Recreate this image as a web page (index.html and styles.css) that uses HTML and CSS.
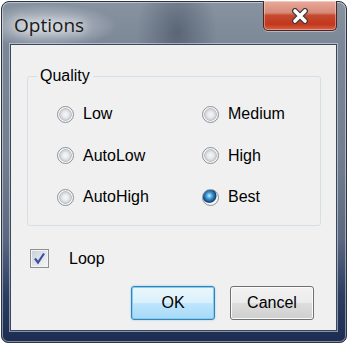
FILE: index.html
```html
<!DOCTYPE html>
<html>
    <head>
        <title>Options</title>
        <link rel="stylesheet" href="styles.css">
    </head>
    <body>
        <div class="window">
            <div class="titlebar">
                <span class="title">Options</span>
                <button type="button" class="close">
                    <svg width="16" height="16" viewBox="0 0 16 16">
                        <path d="M3 3 L13 13 M13 3 L3 13" stroke="#3a3a3a" stroke-width="6" stroke-linecap="round"/>
                        <path d="M3 3 L13 13 M13 3 L3 13" stroke="#ffffff" stroke-width="3.6" stroke-linecap="round"/>
                    </svg>
                </button>
            </div>

            <div class="client">
                <fieldset class="group">
                    <legend>Quality</legend>
                    <div class="choices">
                        <label class="choice"><span class="radio"></span>Low</label>
                        <label class="choice"><span class="radio"></span>Medium</label>
                        <label class="choice"><span class="radio"></span>AutoLow</label>
                        <label class="choice"><span class="radio"></span>High</label>
                        <label class="choice"><span class="radio"></span>AutoHigh</label>
                        <label class="choice"><span class="radio checked"></span>Best</label>
                    </div>
                </fieldset>

                <label class="loop">
                    <span class="check">
                        <svg width="13" height="13" viewBox="0 0 13 13">
                            <path d="M2 6.5 L5 10.5 L11 1.5" fill="none" stroke="#3a52a0" stroke-width="2.2"/>
                        </svg>
                    </span>
                    Loop
                </label>

                <div class="buttons">
                    <button type="button" class="btn default">OK</button>
                    <button type="button" class="btn">Cancel</button>
                </div>
            </div>
        </div>
    </body>
</html>
```

FILE: styles.css
```css
body {
    margin: 0;
    padding: 0;
    background-color: #ffffff;
    font-family: "Liberation Sans", Arial, sans-serif;
    font-size: 16px;
    color: #000000;
}

.window {
    box-sizing: border-box;
    width: 346px;
    margin: 1px 0 0 1px;
    padding: 0 9px 11px 8px;
    border: 1px solid #2a3446;
    border-radius: 8px 8px 7px 7px;
    box-shadow: inset 0 0 0 1px rgba(255, 255, 255, 0.45);
    background:
        radial-gradient(ellipse 70px 22px at 45px 24px, rgba(225, 230, 236, 0.75), rgba(225, 230, 236, 0) 100%),
        radial-gradient(ellipse 40px 60px at 175px 30px, rgba(60, 70, 88, 0.55), rgba(60, 70, 88, 0) 100%),
        linear-gradient(180deg, #8893a1 0%, #7b8696 14%, #737f90 45%, #5a6780 70%, #2c3d62 86%, #1d2d52 100%);
}

.titlebar {
    height: 42px;
    display: flex;
    justify-content: space-between;
    align-items: flex-start;
}

.title {
    margin: 11px 0 0 4px;
    font-family: "Open Sans", "Noto Sans", sans-serif;
    font-size: 19px;
    line-height: 24px;
    color: #1a1a1a;
    text-shadow: 0 0 8px rgba(255, 255, 255, 0.9), 0 0 14px rgba(255, 255, 255, 0.6);
}

.close {
    box-sizing: border-box;
    width: 74px;
    height: 30px;
    margin: -1px 0 0 0;
    padding: 0;
    display: flex;
    align-items: center;
    justify-content: center;
    border: 1px solid #4a2622;
    border-top: none;
    border-radius: 0 0 5px 5px;
    background: linear-gradient(180deg, #e9aa9c 0%, #d88a78 40%, #c44a30 50%, #c2361c 80%, #d8644a 100%);
    box-shadow: inset 0 0 0 1px rgba(255, 255, 255, 0.35), 0 1px 0 rgba(255, 255, 255, 0.4);
}

.client {
    display: flex;
    flex-direction: column;
    padding: 22px 15px 10px 16px;
    border: 1px solid #3b475a;
    background-color: #f0f0f0;
    box-shadow: 0 0 0 1px rgba(220, 228, 238, 0.55);
}

.group {
    margin: 0;
    padding: 0 0 19px 9px;
    border: 1px solid #d5dfe5;
    border-radius: 3px;
}

.group legend {
    padding: 0 3px;
    line-height: 18px;
}

.choices {
    display: grid;
    grid-template-columns: 145px 1fr;
    row-gap: 23.5px;
    padding: 20px 0 0 20px;
}

.choice {
    display: flex;
    align-items: center;
    gap: 9px;
    height: 18px;
}

.radio {
    box-sizing: border-box;
    width: 17px;
    height: 17px;
    border: 1px solid #8d9096;
    border-radius: 50%;
    background: radial-gradient(circle at 50% 50%, #f6f6f6 0, #e7e9eb 30%, #c9cdd2 52%, #b8bdc3 56%, #f7f7f7 62%, #eeeeee 100%);
}

.radio.checked {
    background: radial-gradient(circle at 42% 38%, #c8efff 0, #4aa3dc 22%, #16578f 46%, #0e3f6e 52%, #f7f7f7 60%, #eeeeee 100%);
}

.loop {
    display: flex;
    align-items: center;
    gap: 20px;
    height: 19px;
    margin-top: 23px;
    padding-left: 3px;
}

.check {
    box-sizing: border-box;
    width: 19px;
    height: 19px;
    display: flex;
    align-items: center;
    justify-content: center;
    border: 1px solid #8e8f8f;
    background: linear-gradient(135deg, #c9cfd8 0%, #e4e7ec 60%, #f4f5f7 100%);
    box-shadow: inset 0 0 0 1px #f4f4f4;
}

.buttons {
    display: flex;
    justify-content: flex-end;
    gap: 15px;
    margin-top: 18px;
    padding-right: 7px;
}

.btn {
    box-sizing: border-box;
    width: 84px;
    height: 34px;
    padding: 0;
    font-family: "Liberation Sans", Arial, sans-serif;
    font-size: 16px;
    color: #000000;
    border: 1px solid #707070;
    border-radius: 3px;
    background: linear-gradient(180deg, #f2f2f2 0%, #ebebeb 50%, #dddddd 51%, #cfcfcf 100%);
    box-shadow: inset 0 0 0 1px #fbfbfb;
}

.btn.default {
    border-color: #3c7fb1;
    background: linear-gradient(180deg, #eaf6fd 0%, #d9f0fc 50%, #bee6fd 51%, #a7d9f5 100%);
    box-shadow: inset 0 0 0 1px #7fd0f5, 0 0 2px #7fc6ef;
}
```
